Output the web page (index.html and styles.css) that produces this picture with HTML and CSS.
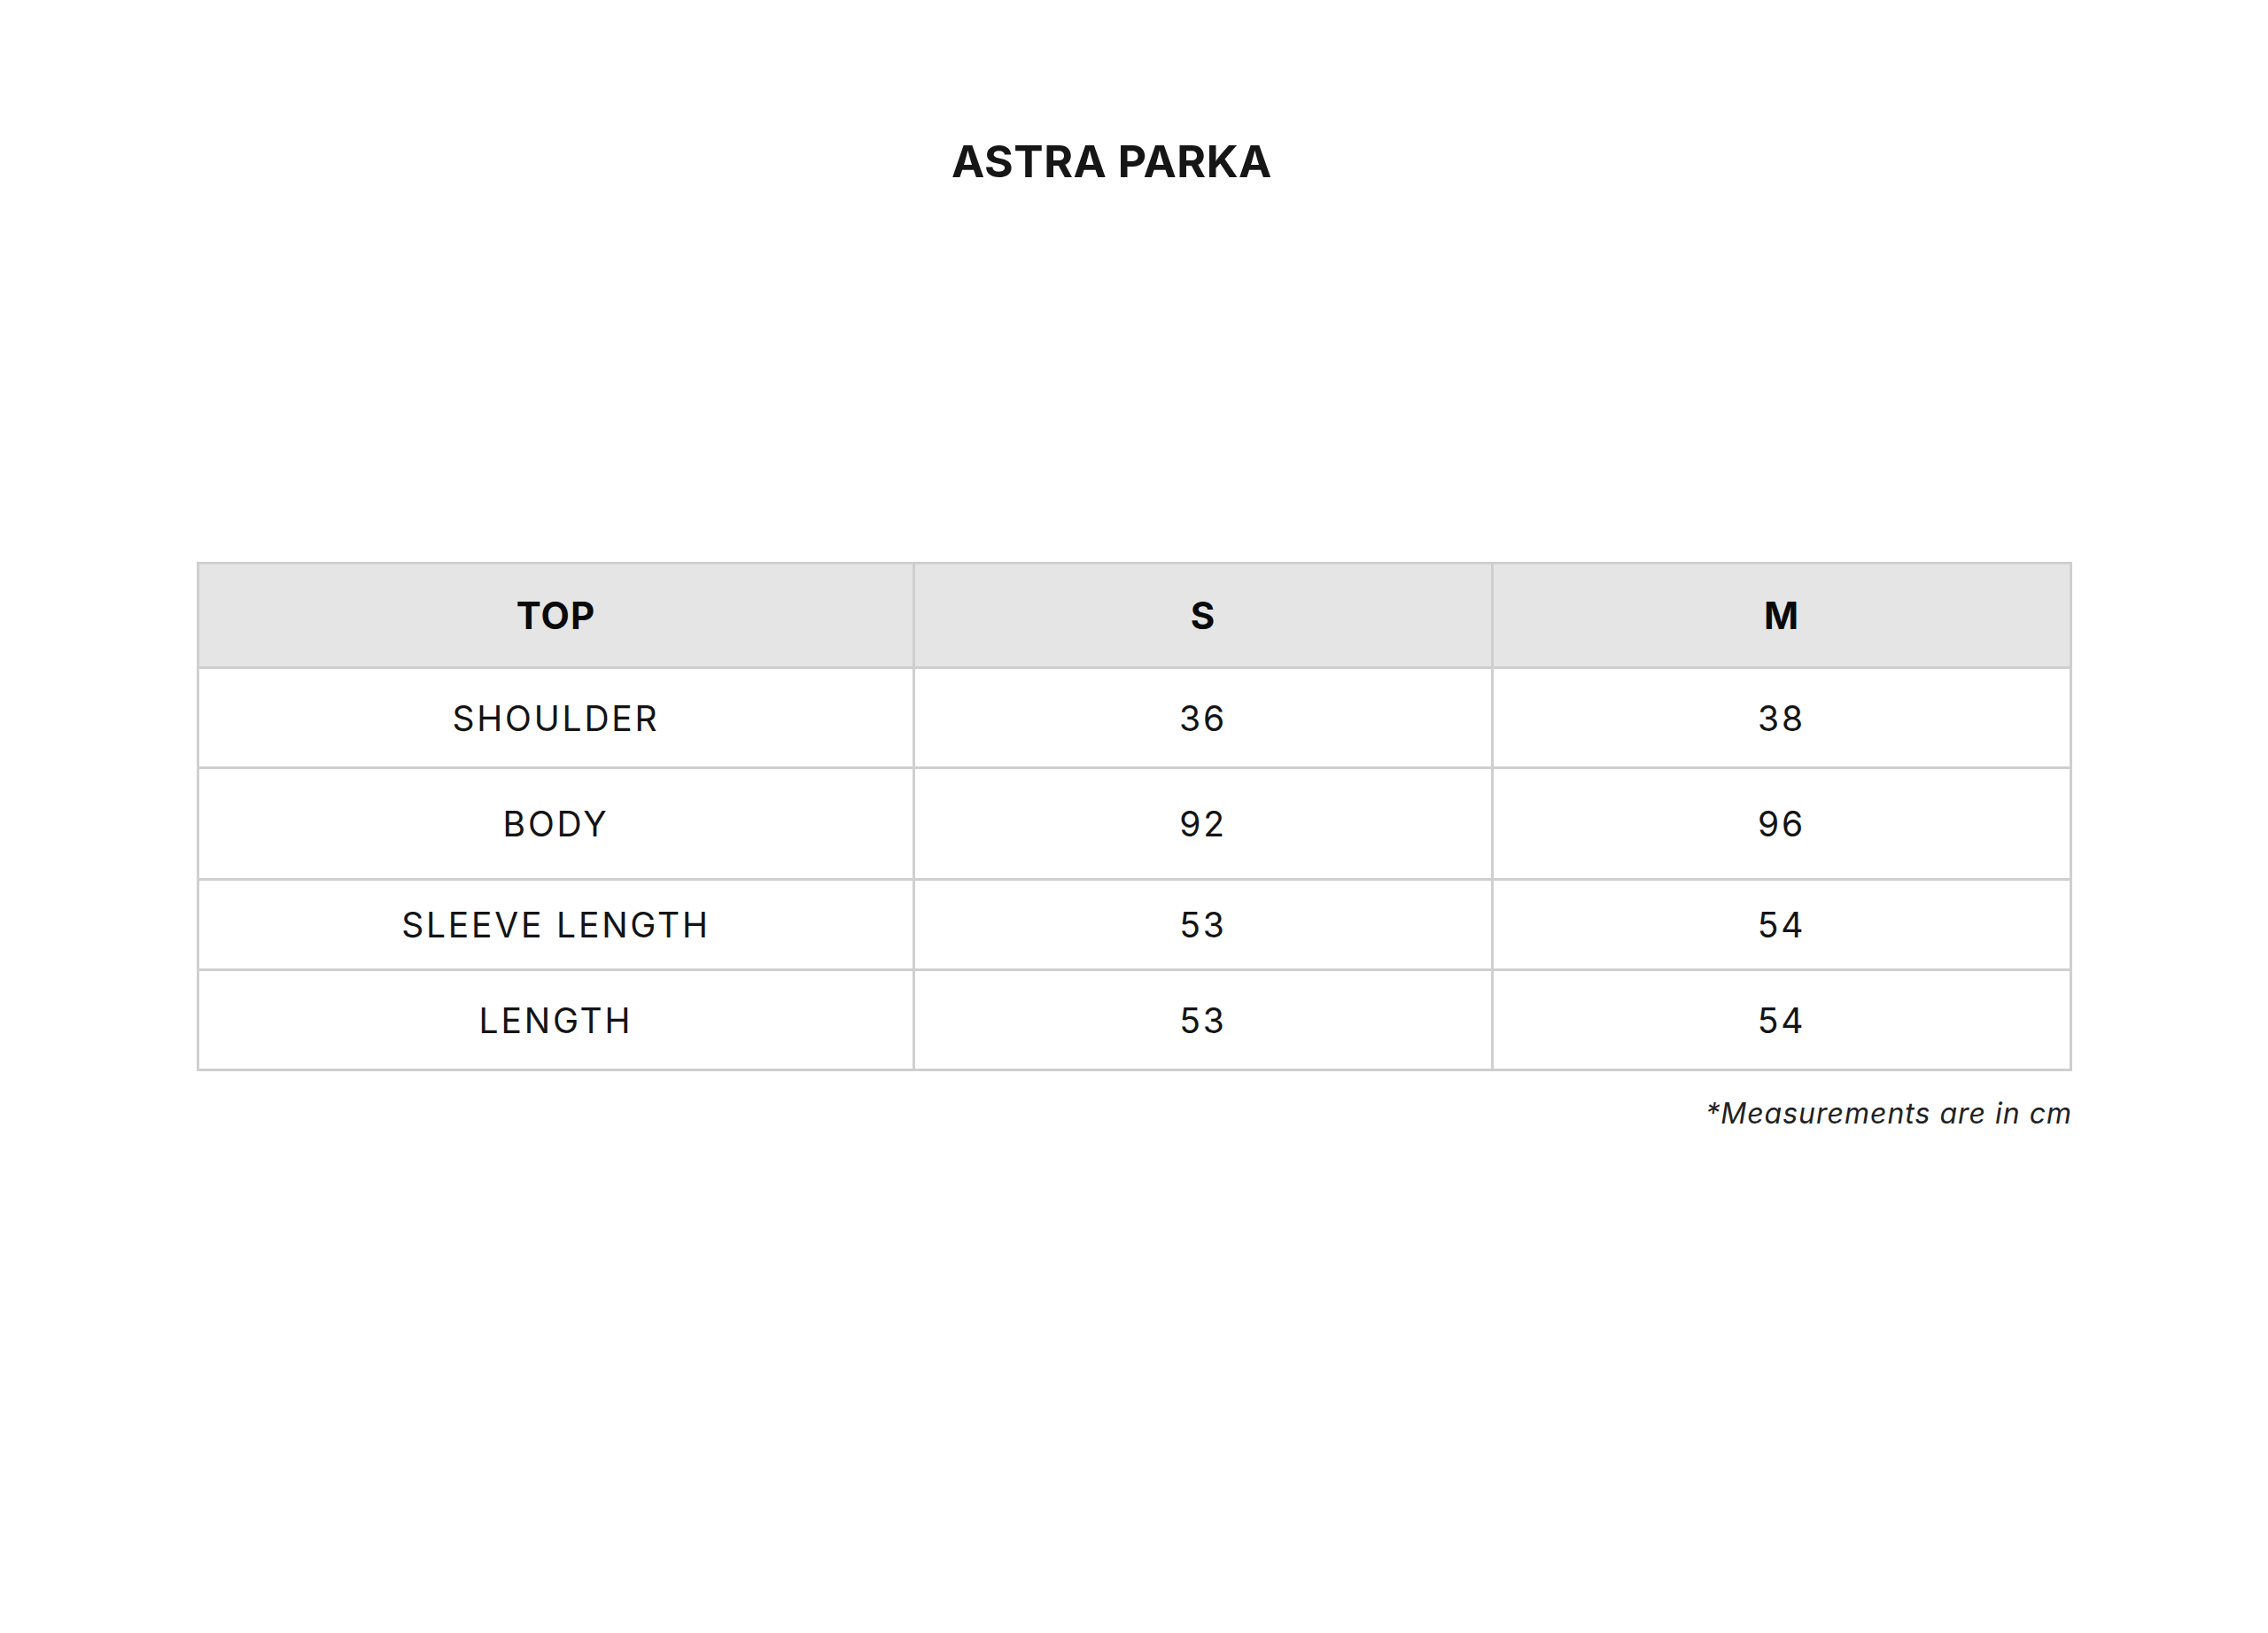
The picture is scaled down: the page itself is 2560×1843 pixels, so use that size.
FILE: index.html
```html
<!DOCTYPE html>
<html>
<head>
<meta charset="utf-8">
<link rel="stylesheet" href="styles.css">
</head>
<body>
<div class="page">
  <h1 class="title">ASTRA PARKA</h1>
  <table class="chart">
    <colgroup>
      <col class="c1"><col class="c2"><col class="c3">
    </colgroup>
    <thead>
      <tr class="r-head"><th>TOP</th><th>S</th><th>M</th></tr>
    </thead>
    <tbody>
      <tr class="r1"><td>SHOULDER</td><td>36</td><td>38</td></tr>
      <tr class="r2"><td>BODY</td><td>92</td><td>96</td></tr>
      <tr class="r3"><td>SLEEVE LENGTH</td><td>53</td><td>54</td></tr>
      <tr class="r4"><td>LENGTH</td><td>53</td><td>54</td></tr>
    </tbody>
  </table>
  <p class="note">*Measurements are in cm</p>
</div>
</body>
</html>
```
FILE: styles.css
```css
html, body {
  margin: 0;
  padding: 0;
  background: #ffffff;
}
body {
  font-family: Inter, "Open Sans", sans-serif;
  color: #111111;
}
.page {
  width: 2114px;
  margin-left: 222px;
  padding-top: 157px;
}
.title {
  margin: 0;
  padding-right: 48px;
  font-size: 50px;
  line-height: 50px;
  font-weight: 700;
  text-align: center;
  color: #161616;
  letter-spacing: 0.5px;
}
.chart {
  margin-top: 427px;
  width: 2114px;
  border-collapse: collapse;
  table-layout: fixed;
  border: 3px solid #cfcfcf;
}
.c1 { width: 808px; }
.c2 { width: 653px; }
.c3 { width: 653px; }
.chart th, .chart td {
  border: 3px solid #cfcfcf;
  text-align: center;
  vertical-align: middle;
  padding: 0;
}
.chart th {
  background: #e5e5e5;
  font-size: 42px;
  font-weight: 700;
  color: #0a0a0a;
  letter-spacing: 1px;
}
.chart td {
  font-size: 39px;
  font-weight: 400;
  color: #141414;
  letter-spacing: 2.8px;
}
.r-head { height: 118px; }
.r1 { height: 113px; }
.r2 { height: 126px; }
.r3 { height: 102px; }
.r4 { height: 113px; }
.note {
  margin: 28px -3px 0 0;
  text-align: right;
  font-size: 32px;
  line-height: 40px;
  font-style: italic;
  color: #222222;
  letter-spacing: 1px;
}
```
